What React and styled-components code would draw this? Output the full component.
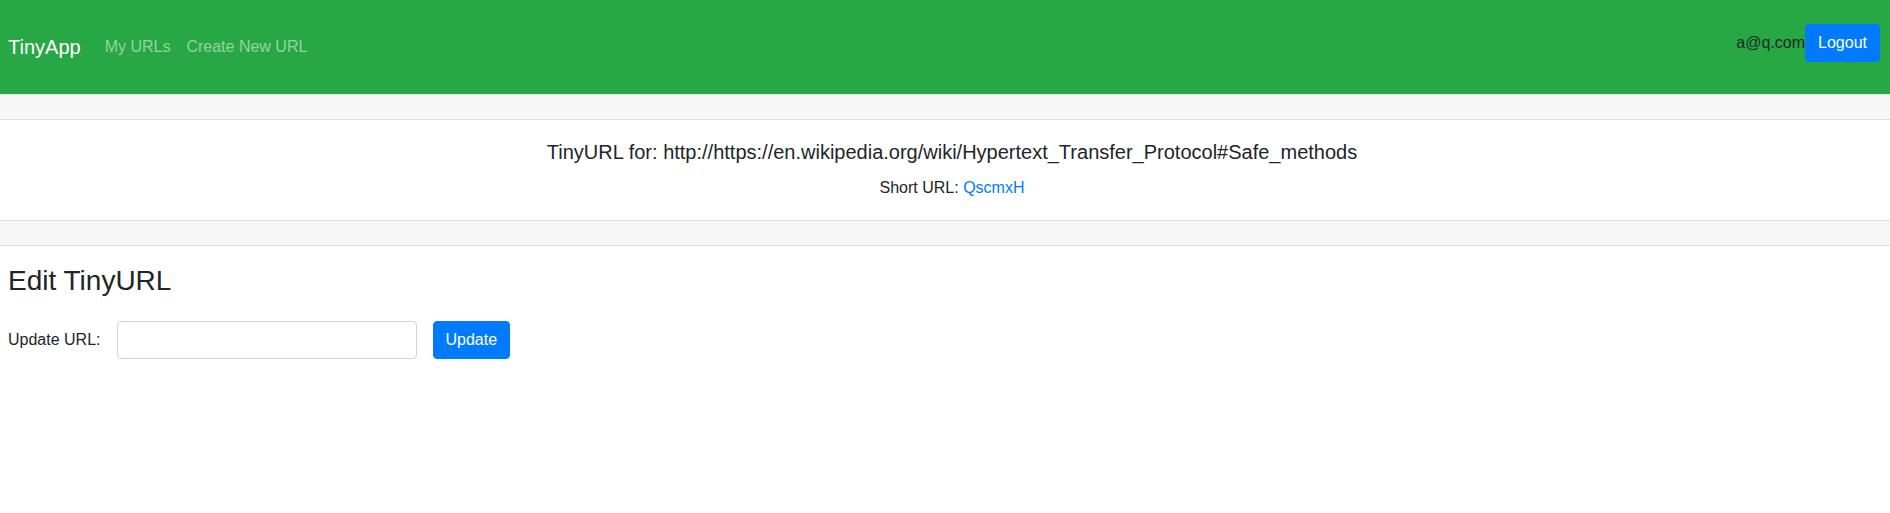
import React from "react";
import styled, { createGlobalStyle } from "styled-components";

const Global = createGlobalStyle`
  html, body { margin: 0; padding: 0; background: #fff; }
  body {
    font-family: "Liberation Sans", Arial, sans-serif;
    font-size: 16px;
    line-height: 1.5;
    color: #212529;
  }
  * { box-sizing: border-box; }
`;

const Navbar = styled.nav`
  height: 94px;
  background: #28a745;
  display: flex;
  align-items: center;
  justify-content: space-between;
  padding: 0 10px 0 8px;
`;

const Left = styled.div`
  display: flex;
  align-items: center;
`;

const Brand = styled.a`
  color: #fff;
  font-size: 20px;
  line-height: 30px;
  text-decoration: none;
  margin-right: 16px;
`;

const NavLink = styled.a`
  color: rgba(255, 255, 255, 0.5);
  font-size: 16px;
  line-height: 24px;
  text-decoration: none;
  padding: 0 8px;
`;

const Right = styled.div`
  display: flex;
  align-items: center;
  margin-bottom: 8px;
`;

const UserEmail = styled.span`
  color: #1f2a22;
  font-size: 16px;
`;

const Button = styled.button`
  font-family: inherit;
  font-size: 16px;
  line-height: 24px;
  color: #fff;
  background: #007bff;
  border: 1px solid #007bff;
  border-radius: 4px;
  padding: 6px 12px;
  height: 38px;
  cursor: pointer;
`;

const Card = styled.section`
  border-top: 1px solid #e4e4e4;
  border-bottom: 1px solid #dfdfdf;
  text-align: center;
`;

const CardBand = styled.div`
  height: 25px;
  background: #f7f7f7;
  border-bottom: ${(p) => (p.$top ? "1px solid #dfdfdf" : "none")};
  border-top: ${(p) => (p.$top ? "none" : "1px solid #dfdfdf")};
`;

const CardBody = styled.div`
  padding: 20px 20px 20px 34px;
  height: 100px;
`;

const CardTitle = styled.h5`
  margin: 0 0 12px;
  font-size: 20px;
  font-weight: 400;
  line-height: 24px;
`;

const CardText = styled.p`
  margin: 0;
  font-size: 16px;
  line-height: 24px;
`;

const Link = styled.a`
  color: #007bff;
  text-decoration: none;
`;

const Main = styled.main`
  padding: 18px 8px;
`;

const Heading = styled.h3`
  margin: 0 0 23px;
  font-size: 28px;
  font-weight: 400;
  line-height: 34px;
`;

const Form = styled.form`
  display: flex;
  align-items: center;
`;

const Label = styled.label`
  font-size: 16px;
  margin-right: 16px;
`;

const Input = styled.input`
  width: 300px;
  height: 38px;
  border: 1px solid #ced4da;
  border-radius: 4px;
  padding: 6px 12px;
  font-size: 16px;
  font-family: inherit;
  margin-right: 16px;
`;

export default function App() {
  return (
    <>
      <Global />
      <Navbar>
        <Left>
          <Brand href="#">TinyApp</Brand>
          <NavLink href="#">My URLs</NavLink>
          <NavLink href="#">Create New URL</NavLink>
        </Left>
        <Right>
          <UserEmail>a@q.com</UserEmail>
          <Button type="button">Logout</Button>
        </Right>
      </Navbar>
      <Card>
        <CardBand $top />
        <CardBody>
          <CardTitle>
            TinyURL for: http://https://en.wikipedia.org/wiki/Hypertext_Transfer_Protocol#Safe_methods
          </CardTitle>
          <CardText>
            Short URL: <Link href="#">QscmxH</Link>
          </CardText>
        </CardBody>
        <CardBand />
      </Card>
      <Main>
        <Heading>Edit TinyURL</Heading>
        <Form onSubmit={(e) => e.preventDefault()}>
          <Label>Update URL:</Label>
          <Input type="text" />
          <Button type="submit">Update</Button>
        </Form>
      </Main>
    </>
  );
}
